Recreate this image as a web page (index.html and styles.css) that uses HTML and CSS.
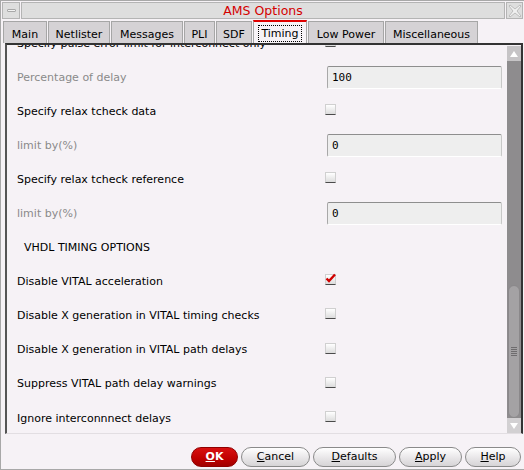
FILE: index.html
```html
<!DOCTYPE html>
<html>
<head>
<meta charset="utf-8">
<link rel="stylesheet" href="styles.css">
</head>
<body>
<div class="window">
  <div class="titlebar">
    <div class="tb-btn"><span class="tb-dash"></span></div>
    <div class="title">AMS Options</div>
    <div class="tb-close">
      <svg width="14" height="14" viewBox="0 0 14 14"><path d="M2 1 L7 5 L12 1 L13 2 L9 7 L13 12 L12 13 L7 9 L2 13 L1 12 L5 7 L1 2 Z" fill="#f0f0f0" stroke="#bdbdbd" stroke-width="1"/></svg>
    </div>
  </div>
  <div class="tabs">
    <div class="tab w-main">Main</div>
    <div class="tab w-net">Netlister</div>
    <div class="tab w-msg">Messages</div>
    <div class="tab w-pli">PLI</div>
    <div class="tab w-sdf">SDF</div>
    <div class="tab w-tim active"><span class="focus">Timing</span></div>
    <div class="tab w-low">Low Power</div>
    <div class="tab w-misc">Miscellaneous</div>
  </div>
  <div class="panel">
    <div class="content">
      <div class="rows">
        <div class="row"><span class="label">Specify pulse error limit for interconnect only</span><span class="cb"></span></div>
        <div class="row"><span class="label dim">Percentage of delay</span><span class="field">100</span></div>
        <div class="row"><span class="label">Specify relax tcheck data</span><span class="cb"></span></div>
        <div class="row"><span class="label dim">limit by(%)</span><span class="field">0</span></div>
        <div class="row"><span class="label">Specify relax tcheck reference</span><span class="cb"></span></div>
        <div class="row"><span class="label dim">limit by(%)</span><span class="field">0</span></div>
        <div class="row"><span class="label section">VHDL TIMING OPTIONS</span><span></span></div>
        <div class="row"><span class="label">Disable VITAL acceleration</span><span class="cb checked"><svg width="11" height="11" viewBox="0 0 11 11"><path d="M1.5 5.5 L4 8 L10 1.5" fill="none" stroke="#d00000" stroke-width="2.4"/></svg></span></div>
        <div class="row"><span class="label">Disable X generation in VITAL timing checks</span><span class="cb"></span></div>
        <div class="row"><span class="label">Disable X generation in VITAL path delays</span><span class="cb"></span></div>
        <div class="row"><span class="label">Suppress VITAL path delay warnings</span><span class="cb"></span></div>
        <div class="row"><span class="label">Ignore interconnnect delays</span><span class="cb"></span></div>
      </div>
    </div>
    <div class="scrollbar">
      <div class="sb-btn"><svg width="10" height="8" viewBox="0 0 10 8"><path d="M5 1 L9 7 L1 7 Z" fill="#ffffff"/></svg></div>
      <div class="sb-track">
        <div class="sb-thumb">
          <div class="grip"><i></i><i></i><i></i><i></i><i></i></div>
        </div>
      </div>
      <div class="sb-btn down"><svg width="10" height="8" viewBox="0 0 10 8"><path d="M1 1 L9 1 L5 7 Z" fill="#ffffff"/></svg></div>
    </div>
  </div>
  <div class="buttons">
    <button class="btn ok"><u>O</u>K</button>
    <button class="btn w-cancel"><u>C</u>ancel</button>
    <button class="btn w-def"><u>D</u>efaults</button>
    <button class="btn w-apply"><u>A</u>pply</button>
    <button class="btn w-help"><u>H</u>elp</button>
  </div>
</div>
</body>
</html>
```
FILE: styles.css
```css
* { box-sizing: border-box; }
html, body { margin: 0; padding: 0; }
body {
  font-family: "DejaVu Sans", sans-serif;
  font-size: 11px;
  color: #000;
  background: #f6f2f6;
}
.window {
  width: 524px;
  height: 470px;
  background: #f6f2f6;
  border-top: 1px solid #a8a8a8;
  border-left: 1px solid #a8a8a8;
  border-bottom: 1px solid #a8a8a8;
  display: flex;
  flex-direction: column;
  overflow: hidden;
}
.titlebar {
  height: 19px;
  display: flex;
  gap: 1px;
  padding: 1px 1px 0 1px;
}
.tb-btn {
  width: 18px;
  height: 17px;
  background: #dedede;
  border: 1px solid #b4b4b4;
  display: flex;
  align-items: center;
  justify-content: center;
}
.tb-dash {
  width: 9px;
  height: 3px;
  background: #f2f2f2;
  border: 1px solid #a8a8a8;
  border-radius: 1px;
}
.title {
  flex: 1;
  height: 17px;
  background: #dedede;
  border: 1px solid #b4b4b4;
  color: #d40000;
  font-size: 12.5px;
  text-align: center;
  line-height: 15px;
}
.tb-close {
  width: 17px;
  height: 17px;
  background: #dedede;
  border: 1px solid #b4b4b4;
  display: flex;
  align-items: center;
  justify-content: center;
}
.tabs {
  height: 23px;
  display: flex;
  align-items: flex-end;
  padding-left: 2px;
}
.tab {
  height: 22px;
  background: #d5d2d5;
  border: 1px solid #a6a6a6;
  border-bottom: none;
  margin-right: 1px;
  text-align: center;
  line-height: 22px;
  padding-top: 2px;
  white-space: nowrap;
}
.tab.active {
  height: 23px;
  background: #f6f2f6;
  border-top: 2px solid #e00000;
  line-height: 19px;
  padding-top: 2px;
}
.focus {
  border: 1px dotted #000;
  padding: 1px 2px;
}
.w-main { width: 44px; }
.w-net { width: 62px; }
.w-msg { width: 72px; }
.w-pli { width: 31px; }
.w-sdf { width: 36px; }
.w-tim { width: 54px; }
.w-low { width: 76px; }
.w-misc { width: 93px; }
.panel {
  height: 391px;
  margin-left: 4px;
  margin-right: 1px;
  border-top: 2px solid #333333;
  border-left: 2px solid #555555;
  border-right: 2px solid #333333;
  border-bottom: 1px solid #e2dee2;
  display: flex;
}
.content {
  flex: 1;
  overflow: hidden;
  padding-left: 10px;
}
.rows {
  margin-top: -19px;
}
.row {
  height: 34px;
  display: grid;
  grid-template-columns: 308px 1fr;
  align-items: center;
}
.row:nth-child(n+7) { height: 34.2px; }
.label { white-space: nowrap; }
.label.dim { color: #8a8a8a; }
.label.section { padding-left: 7px; }
.field {
  margin-left: 2px;
  width: 175px;
  height: 23px;
  background: #eeeeee;
  border: 1px solid #c8c8c8;
  border-top-color: #8e8e8e;
  border-left-color: #a8a8a8;
  border-bottom-color: #ffffff;
  border-radius: 2px;
  font-family: "DejaVu Sans Mono", monospace;
  font-size: 11px;
  line-height: 21px;
  padding-left: 4px;
}
.cb {
  width: 11px;
  height: 11px;
  background: linear-gradient(#ffffff, #dcdcdc);
  border: 1px solid #d0d0d0;
  border-bottom: 1px solid #4a4a4a;
  display: block;
  margin-top: -3px;
  position: relative;
}
.cb.checked svg {
  position: absolute;
  left: -1px;
  top: -2px;
}
.scrollbar {
  width: 14px;
  background: #8e8c8e;
  display: flex;
  flex-direction: column;
  margin-top: 1px;
}
.sb-btn {
  height: 15px;
  background: #c6c4c6;
  display: flex;
  align-items: center;
  justify-content: center;
}
.sb-btn.down {
  background: #d2d0d2;
}
.sb-track {
  flex: 1;
  display: flex;
  flex-direction: column;
  justify-content: flex-end;
  padding: 0 1px;
}
.sb-thumb {
  height: 133px;
  background: #a4a2a4;
  border-radius: 6px 6px 6px 6px;
  border: 1px solid #8a888a;
  display: flex;
  align-items: center;
  justify-content: center;
}
.grip {
  display: flex;
  flex-direction: column;
  gap: 1px;
}
.grip i {
  display: block;
  width: 6px;
  height: 1px;
  background: #6e6c6e;
}
.buttons {
  flex: 1;
  display: flex;
  justify-content: flex-end;
  align-items: flex-start;
  gap: 3px;
  padding-top: 13px;
  padding-right: 3px;
}
.btn {
  height: 20px;
  border: 1px solid #8a8a8a;
  border-radius: 10px;
  background: linear-gradient(#ffffff, #e6e4e6 60%, #d6d4d6);
  font-family: "DejaVu Sans", sans-serif;
  font-size: 11px;
  color: #000;
  padding: 0;
  line-height: 18px;
}
.btn.ok {
  width: 47px;
  background: linear-gradient(#d81010, #c00000 60%, #a00000);
  border-color: #900000;
  color: #ffffff;
  font-weight: bold;
}
.w-cancel { width: 69px; }
.w-def { width: 83px; }
.w-apply { width: 63px; }
.w-help { width: 56px; }
```
